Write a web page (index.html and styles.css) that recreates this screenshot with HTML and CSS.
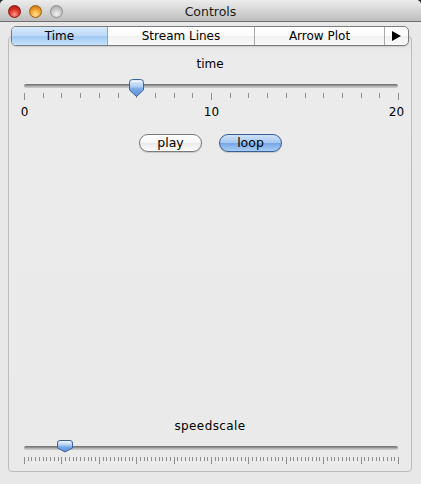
FILE: index.html
```html
<!DOCTYPE html>
<html>
<head>
<meta charset="utf-8">
<link rel="stylesheet" href="styles.css">
</head>
<body>
<div class="window">
  <div class="titlebar">
    <div class="lights">
      <span class="light red"></span>
      <span class="light orange"></span>
      <span class="light gray"></span>
    </div>
    <div class="title">Controls</div>
    <div></div>
  </div>
  <div class="content">
    <div class="tabs">
      <div class="tab sel t1">Time</div>
      <div class="tab t2">Stream Lines</div>
      <div class="tab t3">Arrow Plot</div>
      <div class="tab more"><svg width="9" height="10" viewBox="0 0 9 10"><polygon points="0,0 9,5 0,10" fill="#000"/></svg></div>
    </div>
    <div class="panel">
      <div class="label time-label">time</div>
      <svg class="slider time-slider" width="402" height="42" viewBox="0 0 402 42">
        <defs>
          <linearGradient id="trk" x1="0" y1="0" x2="0" y2="1">
            <stop offset="0" stop-color="#6e6e6e"/>
            <stop offset="0.35" stop-color="#8c8c8c"/>
            <stop offset="0.6" stop-color="#b4b4b4"/>
            <stop offset="1" stop-color="#cfcfcf"/>
          </linearGradient>
          <linearGradient id="thumb" x1="0" y1="0" x2="0" y2="1">
            <stop offset="0" stop-color="#e4effc"/>
            <stop offset="0.4" stop-color="#b2d1f5"/>
            <stop offset="0.55" stop-color="#79a9e6"/>
            <stop offset="1" stop-color="#5c90da"/>
          </linearGradient>
        </defs>
        <rect x="15" y="7" width="374" height="4" rx="2" fill="url(#trk)"/>
        <g class="ticks" id="tt"></g>
        <path d="M120.5,5.5 Q120.5,2.5 123.5,2.5 H131.5 Q134.5,2.5 134.5,5.5 V13 L127.5,19.5 L120.5,13 Z" fill="url(#thumb)" stroke="#3f6397" stroke-width="1"/>
        <path d="M122,4.5 H133" stroke="#ffffff" stroke-opacity="0.6" stroke-width="1"/>
        <text x="15.5" y="39" text-anchor="middle">0</text>
        <text x="202.5" y="39" text-anchor="middle">10</text>
        <text x="387.5" y="39" text-anchor="middle">20</text>
      </svg>
      <div class="buttons">
        <div class="btn play">play</div>
        <div class="btn loop">loop</div>
      </div>
      <div class="spacer"></div>
      <div class="label speed-label">speedscale</div>
      <svg class="slider speed-slider" width="402" height="28" viewBox="0 0 402 28">
        <rect x="15" y="8" width="374" height="4" rx="2" fill="url(#trk)"/>
        <g class="ticks" id="st"></g>
        <path d="M48.5,5 Q48.5,2.5 51,2.5 H61 Q63.5,2.5 63.5,5 V10 L56,14 L48.5,10 Z" fill="url(#thumb)" stroke="#3f6397" stroke-width="1"/>
        <path d="M50,4 H62" stroke="#ffffff" stroke-opacity="0.6" stroke-width="1"/>
      </svg>
    </div>
  </div>
</div>
<script src="script.js"></script>
</body>
</html>
```

FILE: script.js
```js
(function () {
  var ns = "http://www.w3.org/2000/svg";
  function ticks(id, count, step, majorEvery, y1, y2minor, y2major) {
    var g = document.getElementById(id);
    for (var i = 0; i <= count; i++) {
      var x = Math.round(15 + i * step) + 0.5;
      var l = document.createElementNS(ns, "line");
      l.setAttribute("x1", x);
      l.setAttribute("x2", x);
      l.setAttribute("y1", y1);
      l.setAttribute("y2", i % majorEvery === 0 ? y2major : y2minor);
      g.appendChild(l);
    }
  }
  ticks("tt", 20, 18.7, 10, 16, 21, 23);
  ticks("st", 100, 3.74, 10, 19, 23, 26);
})();
```

FILE: styles.css
```css
html {
  background: #2b2b2b;
}
body {
  margin: 0;
  width: 421px;
  height: 484px;
  font-family: "DejaVu Sans", "Liberation Sans", sans-serif;
  font-size: 12px;
  color: #000;
}
.window {
  width: 421px;
  height: 484px;
  background: #e8e8e8;
  border-radius: 5px 5px 0 0;
  overflow: hidden;
  display: flex;
  flex-direction: column;
}
.titlebar {
  height: 21px;
  border-bottom: 1px solid #6f6f6f;
  background: linear-gradient(#ececec, #d6d6d6 50%, #bdbdbd);
  display: grid;
  grid-template-columns: 1fr auto 1fr;
  align-items: center;
}
.lights {
  display: flex;
  gap: 8px;
  padding-left: 8px;
  padding-top: 1px;
}
.light {
  width: 13px;
  height: 13px;
  border-radius: 50%;
  box-sizing: border-box;
}
.red {
  background: radial-gradient(circle at 50% 75%, #ff9d8c 0, #e0392c 45%, #9c0d06 100%);
  border: 1px solid #8a1a12;
}
.orange {
  background: radial-gradient(circle at 50% 75%, #ffe59a 0, #f0a12c 50%, #b8650a 100%);
  border: 1px solid #9a6010;
}
.gray {
  background: radial-gradient(circle at 50% 75%, #f2f2f2 0, #c9c9c9 50%, #9d9d9d 100%);
  border: 1px solid #8d8d8d;
}
.title {
  font-size: 12.5px;
  color: #1a1a1a;
  padding-top: 1px;
}
.content {
  flex: 1;
  display: flex;
  flex-direction: column;
  padding: 4px 9px 12px 8px;
}
.tabs {
  position: relative;
  z-index: 1;
  display: flex;
  height: 20px;
  margin: 0 3px -10px 3px;
  border: 1px solid #7b7b7b;
  border-radius: 5px;
  box-sizing: border-box;
  overflow: hidden;
  background: linear-gradient(#ffffff, #fbfbfb 50%, #f1f1f1 51%, #fafafa);
  box-shadow: 0 1px 1px rgba(0,0,0,0.12);
}
.tab {
  display: flex;
  align-items: center;
  justify-content: center;
  border-right: 1px solid #a9a9a9;
  box-sizing: border-box;
  line-height: 18px;
}
.tab:last-child {
  border-right: none;
}
.t1 { width: 96px; }
.t2 { width: 147px; }
.t3 { width: 130px; }
.more { flex: 1; }
.sel {
  background: linear-gradient(#d6e8fc, #bcd9f8 50%, #9ec8f3 51%, #c6e2fc);
  border-right-color: #8aa8cc;
}
.panel {
  flex: 1;
  display: flex;
  flex-direction: column;
  align-items: stretch;
  border: 1px solid #bcbcbc;
  border-radius: 4px;
  background: linear-gradient(#e3e3e3, #ebebeb 18px, #eaeaea);
  padding: 20px 0 5px 0;
}
.label {
  text-align: center;
  line-height: 15px;
  height: 15px;
  font-size: 12px;
}
.speed-label {
  letter-spacing: 0.4px;
}
.slider {
  display: block;
}
.slider text {
  font-family: "DejaVu Sans", "Liberation Sans", sans-serif;
  font-size: 12px;
  fill: #000;
}
.ticks line {
  stroke: #8e8e8e;
  stroke-width: 1;
}
.time-slider {
  margin-top: 5px;
}
.buttons {
  display: flex;
  justify-content: center;
  gap: 17px;
  margin-top: 15px;
  padding-left: 1px;
}
.btn {
  width: 63px;
  height: 18px;
  box-sizing: border-box;
  border-radius: 9px;
  display: flex;
  align-items: center;
  justify-content: center;
  font-size: 12.5px;
  line-height: 16px;
}
.play {
  border: 1px solid #7a7a7a;
  background: linear-gradient(#ffffff, #f7f7f7 50%, #e9e9e9 51%, #fdfdfd);
  box-shadow: 0 1px 1px rgba(0,0,0,0.15);
}
.loop {
  border: 1px solid #3a5d93;
  background: linear-gradient(#cfe2f9, #a3c6f0 50%, #76a6e5 51%, #a9cdf4);
  box-shadow: 0 1px 1px rgba(0,0,0,0.15);
}
.spacer {
  flex: 1;
}
.speed-label {
  margin-bottom: 0;
}
.speed-slider {
  margin-top: 4px;
}
```
